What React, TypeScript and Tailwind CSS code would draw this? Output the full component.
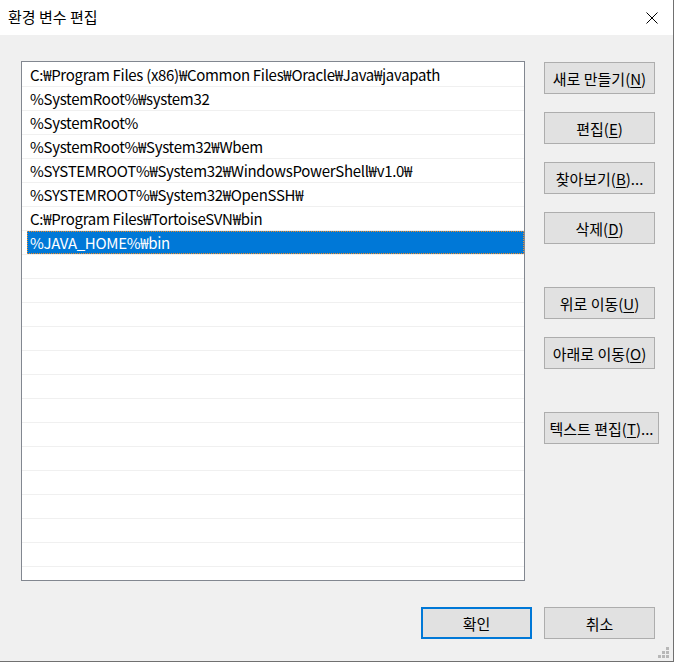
import React from "react";

const paths = [
  "C:₩Program Files (x86)₩Common Files₩Oracle₩Java₩javapath",
  "%SystemRoot%₩system32",
  "%SystemRoot%",
  "%SystemRoot%₩System32₩Wbem",
  "%SYSTEMROOT%₩System32₩WindowsPowerShell₩v1.0₩",
  "%SYSTEMROOT%₩System32₩OpenSSH₩",
  "C:₩Program Files₩TortoiseSVN₩bin",
  "%JAVA_HOME%₩bin",
];

const font = { fontFamily: '"Noto Sans CJK KR", "Noto Sans", sans-serif' };

function Btn({
  label,
  mn,
  suffix = "",
  wide = false,
  primary = false,
}: {
  label: string;
  mn?: string;
  suffix?: string;
  wide?: boolean;
  primary?: boolean;
}) {
  return (
    <button
      className={`flex items-center justify-center h-[32px] bg-[#e1e1e1] text-[15px] text-black leading-none ${
        wide ? "w-[115px]" : "w-[111px]"
      } ${primary ? "border-2 border-[#0078d7]" : "border border-[#adadad]"}`}
    >
      {label}
      {mn && (
        <>
          (<span className="underline underline-offset-2">{mn}</span>)
        </>
      )}
      {suffix}
    </button>
  );
}

export default function App() {
  const rows = Array.from({ length: 22 }, (_, i) => paths[i] ?? "");

  return (
    <div className="w-[675px] h-[663px] bg-white overflow-hidden" style={font}>
      <div className="relative w-[674px] h-[662px] flex flex-col bg-[#f0f0f0] border-r border-b border-[#707070]">
        {/* Title bar */}
        <div className="h-[35px] bg-white flex items-center justify-between pl-[8px] pr-[15px]">
          <span className="text-[15px] text-black">환경 변수 편집</span>
          <svg width="12" height="12" viewBox="0 0 12 12">
            <path d="M0.5 0.5 L11.5 11.5 M11.5 0.5 L0.5 11.5" stroke="#000" strokeWidth="1" />
          </svg>
        </div>

        {/* Body */}
        <div className="flex pt-[26px] pl-[21px]">
          <div className="w-[504px] h-[520px] border border-[#828790] bg-white pt-[1px] overflow-hidden">
            {rows.map((p, i) => {
              const sel = i === 7;
              return (
                <div key={i} className="h-[24px] border-b border-[#f0f0f0] flex">
                  <div
                    className={`ml-[5px] flex-1 flex items-center pl-[3px] pt-[1px] text-[15px] tracking-[-0.3px] whitespace-nowrap ${
                      sel
                        ? "bg-[#0078d7] text-white outline outline-1 outline-dotted outline-[#f08a24] -outline-offset-1"
                        : "text-black"
                    }`}
                  >
                    {p}
                  </div>
                </div>
              );
            })}
          </div>

          <div className="ml-[19px] pt-[1px] flex flex-col">
            <div className="flex flex-col gap-[18px]">
              <Btn label="새로 만들기" mn="N" />
              <Btn label="편집" mn="E" />
              <Btn label="찾아보기" mn="B" suffix="..." />
              <Btn label="삭제" mn="D" />
            </div>
            <div className="mt-[43px] flex flex-col gap-[18px]">
              <Btn label="위로 이동" mn="U" />
              <Btn label="아래로 이동" mn="O" />
            </div>
            <div className="mt-[43px]">
              <Btn label="텍스트 편집" mn="T" suffix="..." wide />
            </div>
          </div>
        </div>

        {/* Footer buttons */}
        <div className="flex justify-end gap-[12px] pr-[18px] mt-[26px]">
          <Btn label="확인" primary />
          <Btn label="취소" />
        </div>

        {/* Resize grip */}
        <svg className="absolute right-[3px] bottom-[2px]" width="12" height="12" viewBox="0 0 12 12">
          <g fill="#b8b8b8">
            <rect x="8" y="0" width="3" height="3" />
            <rect x="4" y="4" width="3" height="3" />
            <rect x="8" y="4" width="3" height="3" />
            <rect x="0" y="8" width="3" height="3" />
            <rect x="4" y="8" width="3" height="3" />
            <rect x="8" y="8" width="3" height="3" />
          </g>
        </svg>
      </div>
    </div>
  );
}
